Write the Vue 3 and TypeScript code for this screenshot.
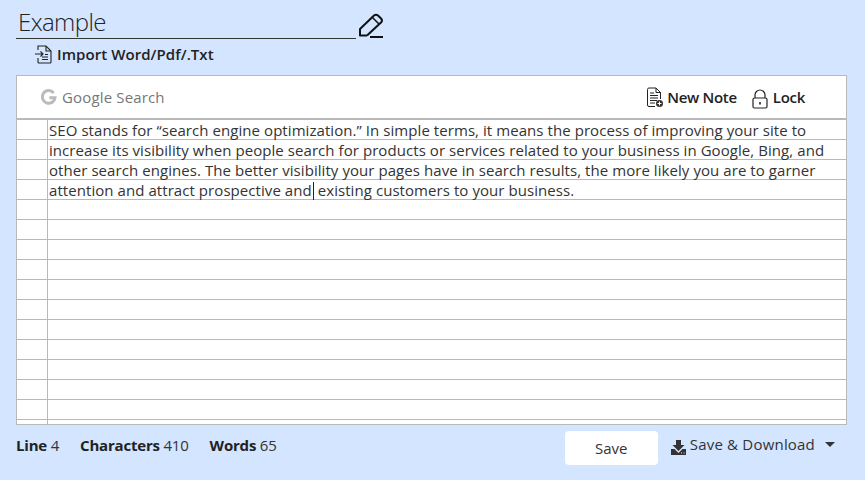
<script setup lang="ts">
const lines = [
  'SEO stands for “search engine optimization.” In simple terms, it means the process of improving your site to',
  'increase its visibility when people search for products or services related to your business in Google, Bing, and',
  'other search engines. The better visibility your pages have in search results, the more likely you are to garner',
  'attention and attract prospective and',
]
const rows = Array.from({ length: 16 }, (_, i) => lines[i] ?? '')
</script>

<template>
  <div class="page">
    <div class="title-row">
      <div class="title">Example</div>
      <svg class="pencil" width="26" height="26" viewBox="0 0 26 26" fill="none" stroke="#111" stroke-width="2">
        <path d="M9 22.500 H2 V16 L16 2.500 Q18 1 20 2.500 L23 5.500 Q25 7.500 23 9.500 L9 22.500" stroke-linejoin="round" />
        <path d="M14.500 4.500 L21 11" stroke-width="1.500" />
        <path d="M12 24 H25" />
      </svg>
    </div>

    <div class="import">
      <svg width="19" height="20" viewBox="0 0 19 20" fill="none" stroke="#222" stroke-width="1.100">
        <path d="M4 6 V2 H12 L17 7 V18 Q17 19 16 19 H5 Q4 19 4 18 V14" />
        <path d="M12 2 V7 H17" />
        <path d="M1 10 H9 M6.500 7.500 L9 10 L6.500 12.500" />
        <path d="M8 13 H14 M8 15.500 H14 M11 10.500 H14" />
      </svg>
      <span>Import Word/Pdf/.Txt</span>
    </div>

    <div class="card">
      <div class="toolbar">
        <div class="search">
          <svg width="16" height="16" viewBox="0 0 48 48">
            <path fill="none" stroke="#bbb" stroke-width="9" d="M38 12 A19 19 0 1 0 42 26 H25" />
          </svg>
          <span>Google Search</span>
        </div>
        <div class="actions">
          <div class="action">
            <svg class="note-icon" width="18" height="21" viewBox="0 0 18 21" fill="none" stroke="#222" stroke-width="1">
              <path d="M9 19.500 H3 Q1.500 19.500 1.500 18 V2.500 Q1.500 1 3 1 H10 L14.500 5.500 V12" />
              <path d="M10 1 V5.500 H14.500" />
              <path d="M4 6 H8 M4 8.500 H12 M4 11 H12 M4 13.500 H11 M4 16 H9" />
              <circle cx="13.500" cy="16.500" r="3.500" fill="#333" stroke="none" />
              <path d="M13.500 14.500 V18.500 M11.500 16.500 H15.500" stroke="#fff" />
            </svg>
            <span>New Note</span>
          </div>
          <div class="action lock">
            <svg class="lock-icon" width="16" height="20" viewBox="0 0 16 20" fill="none" stroke="#222" stroke-width="1.200">
              <path d="M3 9 V6 A5 5 0 0 1 13 6 V9" />
              <rect x="1" y="9" width="14" height="10" rx="1.500" />
              <path d="M8 13 V15.500" stroke-width="1.600" />
            </svg>
            <span>Lock</span>
          </div>
        </div>
      </div>

      <div class="sheet">
        <div v-for="(text, i) in rows" :key="i" class="row">
          <div class="gutter"></div>
          <div class="cell">
            {{ text }}<template v-if="i === 3"><span class="caret"></span> existing customers to your business.</template>
          </div>
        </div>
      </div>
    </div>

    <div class="footer">
      <div class="stats">
        <span><b>Line</b> 4</span>
        <span><b>Characters</b> 410</span>
        <span><b>Words</b> 65</span>
      </div>
      <div class="buttons">
        <button class="save">Save</button>
        <div class="download">
          <svg width="15" height="15" viewBox="0 0 15 15" fill="#333">
            <path d="M5 0 H10 V5 H13.500 L7.500 11 L1.500 5 H5 Z" />
            <path fill-rule="evenodd" d="M0 9 H3.500 L7.500 13 L11.500 9 H15 V15 H0 Z M10 12.500 H11 V13.500 H10 Z M12.500 12.500 H13.500 V13.500 H12.500 Z" />
          </svg>
          <span>Save &amp; Download</span>
          <i class="arrow"></i>
        </div>
      </div>
    </div>
  </div>
</template>

<style>
html,
body {
  margin: 0;
  background: #d3e5ff;
}
</style>

<style scoped>
.page {
  width: 865px;
  height: 480px;
  box-sizing: border-box;
  padding: 0 18px 0 16px;
  font-family: "Open Sans", "Noto Sans", sans-serif;
  color: #333;
  background: #d3e5ff;
  overflow: hidden;
}

.title-row {
  display: flex;
  align-items: flex-end;
  height: 39px;
}

.title {
  width: 338px;
  height: 38px;
  border-bottom: 1px solid #333;
  font-size: 24px;
  font-weight: 300;
  line-height: 43px;
  padding-left: 2px;
  letter-spacing: -0.6px;
  color: #222;
}

.pencil {
  margin: 0 0 0 2px;
}

.import {
  display: flex;
  align-items: center;
  gap: 4px;
  height: 36px;
  padding: 0 0 6px 18px;
  box-sizing: border-box;
  font-size: 15px;
  font-weight: 600;
  letter-spacing: 0.07px;
  color: #222;
}

.card {
  border: 1px solid #b9b9b9;
  background: #fff;
  height: 350px;
  box-sizing: border-box;
  overflow: hidden;
}

.toolbar {
  display: flex;
  justify-content: space-between;
  align-items: center;
  height: 42px;
  border-bottom: 2px solid #b9b9b9;
}

.search {
  display: flex;
  align-items: center;
  gap: 5px;
  padding-left: 24px;
  font-size: 15px;
  color: #777;
  letter-spacing: 0.15px;
}

.actions {
  display: flex;
  gap: 15px;
  padding-right: 41px;
  color: #222;
  font-size: 15px;
  font-weight: 600;
  letter-spacing: -0.3px;
}

.action {
  display: flex;
  align-items: center;
  gap: 3px;
}

.action.lock {
  gap: 5px;
}

.note-icon {
  margin-top: 1px;
}

.lock-icon {
  margin-top: 3px;
}

.row {
  display: flex;
  height: 20px;
  box-sizing: border-box;
  border-bottom: 1px solid #b9b9b9;
}

.gutter {
  width: 30px;
  border-right: 1px solid #b9b9b9;
}

.cell {
  padding-left: 1px;
  font-size: 15px;
  line-height: 20px;
  white-space: nowrap;
  color: #333;
  letter-spacing: 0.065px;
}

.caret {
  display: inline-block;
  width: 1px;
  height: 18px;
  margin-left: 1px;
  vertical-align: -4px;
  background: #222;
}

.footer {
  display: flex;
  justify-content: space-between;
  align-items: center;
  margin-top: 6px;
}

.stats {
  display: flex;
  gap: 21px;
  font-size: 15px;
  letter-spacing: -0.2px;
  padding-bottom: 7px;
}

.stats b {
  font-weight: 700;
  color: #222;
}

.buttons {
  display: flex;
  align-items: center;
  gap: 13px;
}

.save {
  width: 93px;
  height: 34px;
  border: none;
  border-radius: 4px;
  background: #fff;
  font: inherit;
  font-size: 15px;
  color: #333;
}

.download {
  display: flex;
  align-items: center;
  gap: 4px;
  font-size: 15px;
  letter-spacing: 0.2px;
  padding-bottom: 8px;
  padding-right: 12px;
}

.download svg {
  margin-top: 6px;
}

.arrow {
  margin-left: 6px;
  border-top: 5px solid #333;
  border-left: 5px solid transparent;
  border-right: 5px solid transparent;
}
</style>
